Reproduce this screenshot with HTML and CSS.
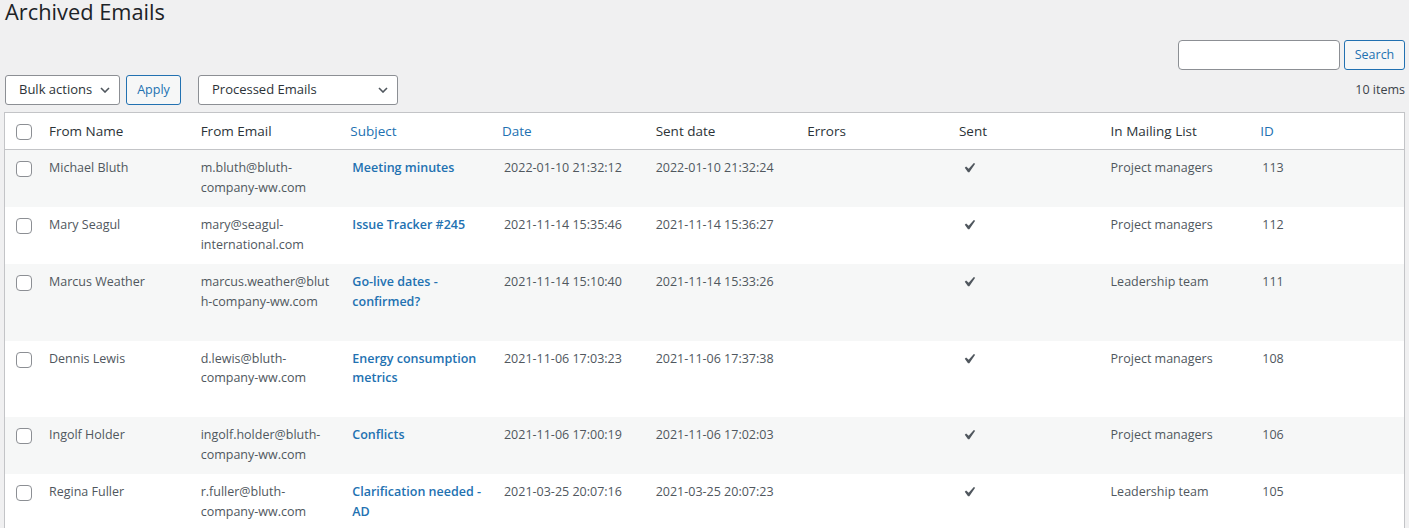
FILE: index.html
```html
<!DOCTYPE html>
<html lang="en">
<head>
<meta charset="utf-8">
<title>Archived Emails</title>
<link rel="stylesheet" href="styles.css">
</head>
<body>
<div class="wrap">
  <h1 class="page-title">Archived Emails</h1>
  <div class="search-row">
    <input class="search-input" type="search" aria-label="Search">
    <button class="btn search">Search</button>
  </div>
  <div class="tablenav">
    <div class="fake-select bulk"><span>Bulk actions</span><svg class="chev" viewBox="0 0 10 6" width="10" height="6"><polyline points="1,1 5,5 9,1" fill="none" stroke="#50575e" stroke-width="1.6"/></svg></div>
    <button class="btn apply">Apply</button>
    <div class="fake-select filter"><span>Processed Emails</span><svg class="chev" viewBox="0 0 10 6" width="10" height="6"><polyline points="1,1 5,5 9,1" fill="none" stroke="#50575e" stroke-width="1.6"/></svg></div>
    <div class="count">10 items</div>
  </div>
  <table class="list">
    <colgroup>
      <col class="c-check"><col><col><col><col><col><col><col><col><col>
    </colgroup>
    <thead>
      <tr>
        <th class="check"><span class="cb"></span></th>
        <th>From Name</th>
        <th>From Email</th>
        <th class="sortable">Subject</th>
        <th class="sortable">Date</th>
        <th>Sent date</th>
        <th>Errors</th>
        <th>Sent</th>
        <th>In Mailing List</th>
        <th class="sortable">ID</th>
      </tr>
    </thead>
    <tbody>
      <tr>
        <td class="check"><span class="cb"></span></td>
        <td>Michael Bluth</td>
        <td class="email">m.bluth@bluth-company-ww.com</td>
        <td class="subject"><a>Meeting minutes</a><div class="row-actions"></div></td>
        <td>2022-01-10 21:32:12</td>
        <td>2022-01-10 21:32:24</td>
        <td></td>
        <td><svg class="yes" viewBox="0 0 20 20" width="20" height="20"><path d="M14.83 4.89l1.34.94-5.81 8.38H9.02L5.780 9.67l1.34-1.25 2.57 2.4z" fill="#50575e"/></svg></td>
        <td>Project managers</td>
        <td class="id">113</td>
      </tr>
      <tr>
        <td class="check"><span class="cb"></span></td>
        <td>Mary Seagul</td>
        <td class="email">mary@seagul-international.com</td>
        <td class="subject"><a>Issue Tracker #245</a><div class="row-actions"></div></td>
        <td>2021-11-14 15:35:46</td>
        <td>2021-11-14 15:36:27</td>
        <td></td>
        <td><svg class="yes" viewBox="0 0 20 20" width="20" height="20"><path d="M14.83 4.89l1.34.94-5.81 8.38H9.02L5.78 9.67l1.34-1.25 2.57 2.4z" fill="#50575e"/></svg></td>
        <td>Project managers</td>
        <td class="id">112</td>
      </tr>
      <tr>
        <td class="check"><span class="cb"></span></td>
        <td>Marcus Weather</td>
        <td class="email">marcus.weather@bluth-company-ww.com</td>
        <td class="subject"><a>Go-live dates - confirmed?</a><div class="row-actions"></div></td>
        <td>2021-11-14 15:10:40</td>
        <td>2021-11-14 15:33:26</td>
        <td></td>
        <td><svg class="yes" viewBox="0 0 20 20" width="20" height="20"><path d="M14.83 4.89l1.34.94-5.81 8.38H9.02L5.78 9.67l1.34-1.25 2.57 2.4z" fill="#50575e"/></svg></td>
        <td>Leadership team</td>
        <td class="id">111</td>
      </tr>
      <tr>
        <td class="check"><span class="cb"></span></td>
        <td>Dennis Lewis</td>
        <td class="email">d.lewis@bluth-company-ww.com</td>
        <td class="subject"><a>Energy consumption metrics</a><div class="row-actions"></div></td>
        <td>2021-11-06 17:03:23</td>
        <td>2021-11-06 17:37:38</td>
        <td></td>
        <td><svg class="yes" viewBox="0 0 20 20" width="20" height="20"><path d="M14.83 4.89l1.34.94-5.81 8.38H9.02L5.78 9.67l1.34-1.25 2.57 2.4z" fill="#50575e"/></svg></td>
        <td>Project managers</td>
        <td class="id">108</td>
      </tr>
      <tr>
        <td class="check"><span class="cb"></span></td>
        <td>Ingolf Holder</td>
        <td class="email">ingolf.holder@bluth-company-ww.com</td>
        <td class="subject"><a>Conflicts</a><div class="row-actions"></div></td>
        <td>2021-11-06 17:00:19</td>
        <td>2021-11-06 17:02:03</td>
        <td></td>
        <td><svg class="yes" viewBox="0 0 20 20" width="20" height="20"><path d="M14.83 4.89l1.34.94-5.81 8.38H9.02L5.78 9.67l1.34-1.25 2.57 2.4z" fill="#50575e"/></svg></td>
        <td>Project managers</td>
        <td class="id">106</td>
      </tr>
      <tr>
        <td class="check"><span class="cb"></span></td>
        <td>Regina Fuller</td>
        <td class="email">r.fuller@bluth-company-ww.com</td>
        <td class="subject"><a>Clarification needed - AD</a><div class="row-actions"></div></td>
        <td>2021-03-25 20:07:16</td>
        <td>2021-03-25 20:07:23</td>
        <td></td>
        <td><svg class="yes" viewBox="0 0 20 20" width="20" height="20"><path d="M14.83 4.89l1.34.94-5.81 8.38H9.02L5.78 9.67l1.34-1.25 2.57 2.4z" fill="#50575e"/></svg></td>
        <td>Leadership team</td>
        <td class="id">105</td>
      </tr>
    </tbody>
  </table>
</div>
</body>
</html>
```

FILE: styles.css
```css
html, body {
  margin: 0;
  padding: 0;
  background: #f0f0f1;
}
body {
  font-family: "Open Sans", "Noto Sans", "Liberation Sans", sans-serif;
  font-size: 12.5px;
  line-height: 19.5px;
  color: #3c434a;
  overflow: hidden;
}
.wrap {
  margin: 0 4px 0 4px;
}
.page-title {
  margin: 0 0 0 1px;
  font-size: 21.8px;
  font-weight: 400;
  line-height: 23px;
  color: #1d2327;
}
.search-row {
  display: flex;
  justify-content: flex-end;
  gap: 4px;
  margin-top: 17px;
  height: 30px;
}
.search-input {
  box-sizing: border-box;
  width: 162px;
  height: 30px;
  border: 1px solid #8c8f94;
  border-radius: 4px;
  background: #fff;
  margin: 0;
  padding: 0 8px;
}
.btn {
  box-sizing: border-box;
  height: 30px;
  margin: 0;
  padding: 0;
  border: 1px solid #2271b1;
  border-radius: 3px;
  background: #f6f7f7;
  color: #2271b1;
  font-family: inherit;
  font-size: 12.5px;
  line-height: 28px;
  text-align: center;
}
.btn.search { width: 61px; }
.tablenav {
  display: flex;
  align-items: center;
  margin-top: 5px;
  height: 30px;
  padding-left: 1px;
}
.fake-select {
  box-sizing: border-box;
  height: 30px;
  display: flex;
  align-items: center;
  justify-content: space-between;
  padding: 0 9px 0 13px;
  border: 1px solid #8c8f94;
  border-radius: 3px;
  background: #fff;
  color: #2c3338;
  font-size: 13px;
}
.fake-select.bulk { width: 115px; }
.fake-select.filter { width: 200px; margin-left: 17px; }
.apply { margin-left: 6px; width: 55px; }
.chev { display: block; }
.count {
  margin-left: auto;
  color: #3c434a;
}
.list {
  margin-top: 7px;
  width: 100%;
  table-layout: fixed;
  border-collapse: separate;
  border-spacing: 0;
  border: 1px solid #c3c4c7;
  border-bottom: none;
  background: #fff;
}
.c-check { width: 34px; }
.list th {
  text-align: left;
  font-weight: 400;
  font-size: 13.5px;
  line-height: 20px;
  color: #2c3338;
  padding: 8px 10px;
  border-bottom: 1px solid #c3c4c7;
  vertical-align: top;
}
.list th.sortable {
  color: #2271b1;
  padding-left: 8px;
}
.list td {
  padding: 8px 10px;
  vertical-align: top;
  color: #50575e;
  overflow-wrap: anywhere;
}
.list tbody tr:nth-child(odd) { background: #f6f7f7; }
.list th.check, .list td.check {
  padding: 11px 0 0 11px;
}
.cb {
  display: block;
  box-sizing: border-box;
  width: 16px;
  height: 16px;
  border: 1px solid #8c8f94;
  border-radius: 4px;
  background: #fff;
}
.subject a {
  color: #2271b1;
  font-weight: 600;
}
.row-actions {
  height: 19.5px;
  padding-top: 2px;
}
.yes { display: block; }
.id { padding-left: 9px; }
```
